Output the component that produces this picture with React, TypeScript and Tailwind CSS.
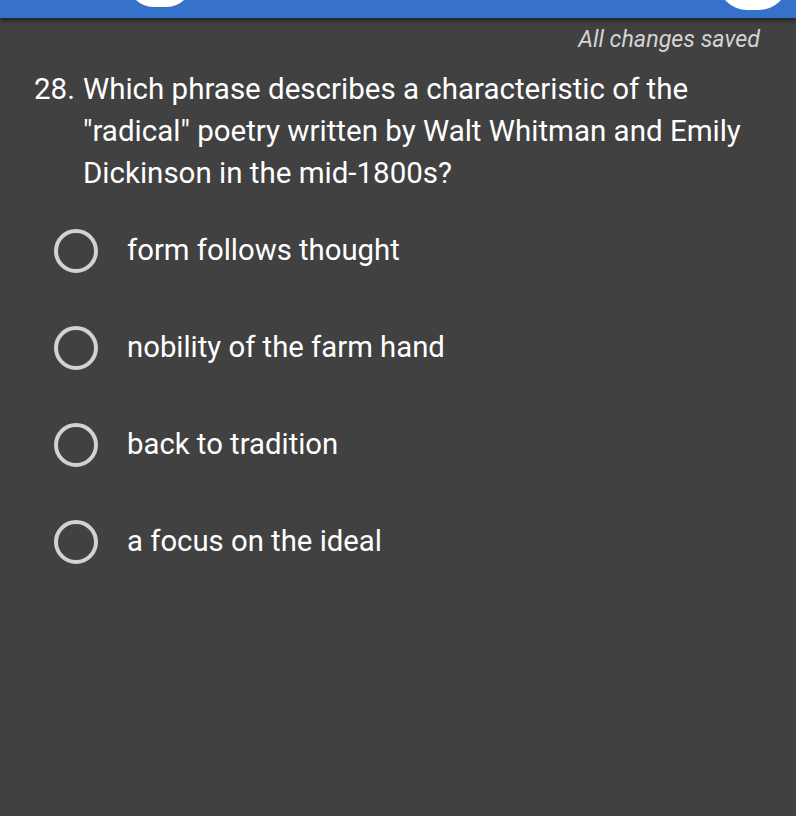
const options = [
  'form follows thought',
  'nobility of the farm hand',
  'back to tradition',
  'a focus on the ideal',
];

function Radio() {
  return (
    <span className="block h-[44px] w-[44px] shrink-0 rounded-full border-[4px] border-[#d2d2d2]" />
  );
}

export default function App() {
  return (
    <div
      className="relative h-[816px] w-[796px] overflow-hidden bg-[#414141]"
      style={{ fontFamily: 'Roboto, "Noto Sans", sans-serif' }}
    >
      {/* top app bar, cut off */}
      <div className="relative h-[18px] w-full bg-[#3672cc] shadow-[0_3px_4px_rgba(0,0,0,0.45)]">
        <div className="absolute left-[128px] top-[-44px] h-[51px] w-[64px] rounded-full bg-white" />
        <div className="absolute left-[718px] top-[-48px] h-[58px] w-[70px] rounded-full bg-white" />
      </div>

      <div className="flex justify-end pr-[36px] pt-[6px]">
        <span className="text-[23.3px] italic leading-[30px] text-[#d4d4d4]">All changes saved</span>
      </div>

      <div className="flex pl-[34px] pr-[30px] pt-[14px] text-[29.5px] leading-[42px] text-white">
        <span className="w-[49px] shrink-0">28.</span>
        <span>
          Which phrase describes a characteristic of the "radical" poetry written by Walt Whitman and Emily
          Dickinson in the mid-1800s?
        </span>
      </div>

      <div className="mt-[8px] flex flex-col">
        {options.map((o) => (
          <div key={o} className="flex h-[97px] items-center gap-[29px] pl-[54px]">
            <Radio />
            <span className="text-[29.3px] text-white">{o}</span>
          </div>
        ))}
      </div>
    </div>
  );
}
